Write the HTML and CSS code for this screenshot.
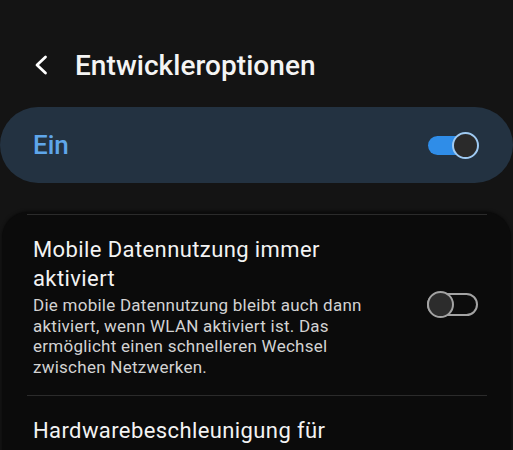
FILE: index.html
```html
<!DOCTYPE html>
<html lang="de">
<head>
<meta charset="utf-8">
<link rel="stylesheet" href="styles.css">
</head>
<body>
<div class="screen">
  <header class="appbar">
    <svg class="back" width="16" height="20" viewBox="0 0 16 20"><path d="M12.5 2 L4 10 L12.5 18" fill="none" stroke="#fff" stroke-width="2.8" stroke-linecap="round" stroke-linejoin="round"/></svg>
    <h1 class="title">Entwickleroptionen</h1>
  </header>
  <div class="master">
    <span class="master-label">Ein</span>
    <span class="switch on"><span class="thumb"></span></span>
  </div>
  <div class="card">
    <div class="divider"></div>
    <div class="item">
      <div class="text">
        <div class="item-title">Mobile Datennutzung immer aktiviert</div>
        <div class="item-desc">Die mobile Datennutzung bleibt auch dann aktiviert, wenn WLAN aktiviert ist. Das ermöglicht einen schnelleren Wechsel zwischen Netzwerken.</div>
      </div>
      <span class="switch off"><span class="thumb"></span></span>
    </div>
    <div class="divider"></div>
    <div class="item">
      <div class="text">
        <div class="item-title">Hardwarebeschleunigung für Tethering</div>
      </div>
    </div>
  </div>
</div>
</body>
</html>
```
FILE: styles.css
```css
html, body {
  margin: 0;
  padding: 0;
  background: #141414;
  overflow: hidden;
}
.screen {
  width: 513px;
  height: 450px;
  overflow: hidden;
  font-family: Roboto, "Noto Sans", sans-serif;
  color: #f2f2f2;
}
.appbar {
  display: flex;
  align-items: center;
  height: 56px;
  padding: 37px 0 0 33px;
}
.back {
  display: block;
}
.title {
  margin: 0 0 0 26px;
  font-size: 28px;
  font-weight: 500;
  letter-spacing: 0.05px;
  color: #f4f4f4;
}
.master {
  margin-top: 14px;
  height: 76px;
  border-radius: 38px;
  background: #233241;
  display: flex;
  align-items: center;
  justify-content: space-between;
  padding: 0 34px 0 33px;
}
.master-label {
  font-size: 26px;
  font-weight: 500;
  color: #5fa6ea;
}
.switch {
  position: relative;
  display: block;
  flex: none;
  width: 51px;
  height: 27px;
}
.switch::before {
  content: "";
  position: absolute;
  left: 0;
  top: 4px;
  width: 51px;
  height: 19px;
  border-radius: 10px;
  box-sizing: border-box;
}
.switch .thumb {
  position: absolute;
  top: 0;
  width: 27px;
  height: 27px;
  border-radius: 50%;
  box-sizing: border-box;
  background: #2a2a2a;
}
.switch.on::before {
  background: #2f8de8;
  width: 44px;
}
.switch.on .thumb {
  right: 0;
  border: 2px solid #9fcaf2;
}
.switch.off::before {
  top: 2px;
  height: 23px;
  border-radius: 12px;
  border: 2px solid #a3a3a3;
  background: #0c0c0c;
}
.switch.off .thumb {
  left: 0;
  border: 2px solid #a3a3a3;
  background: #2c2c2c;
}
.card {
  margin: 29px 2px 0 2px;
  background: #0b0b0b;
  border-radius: 26px 26px 0 0;
  padding-top: 2px;
  box-shadow: 0 -1px 3px rgba(0,0,0,0.5);
}
.divider {
  height: 1px;
  margin: 0 24px 0 25px;
  background: #2b2b2b;
}
.item {
  display: flex;
  align-items: flex-start;
  justify-content: space-between;
  padding: 21px 33px 18px 31px;
}
.text {
  width: 340px;
}
.item-title {
  font-size: 22px;
  line-height: 28.5px;
  letter-spacing: 0.4px;
  color: #f3f3f3;
}
.item-desc {
  margin-top: 2px;
  font-size: 17px;
  line-height: 20.6px;
  letter-spacing: 0.25px;
  color: #d3d3d3;
}
.item .switch.off {
  margin-top: 55px;
}
```
